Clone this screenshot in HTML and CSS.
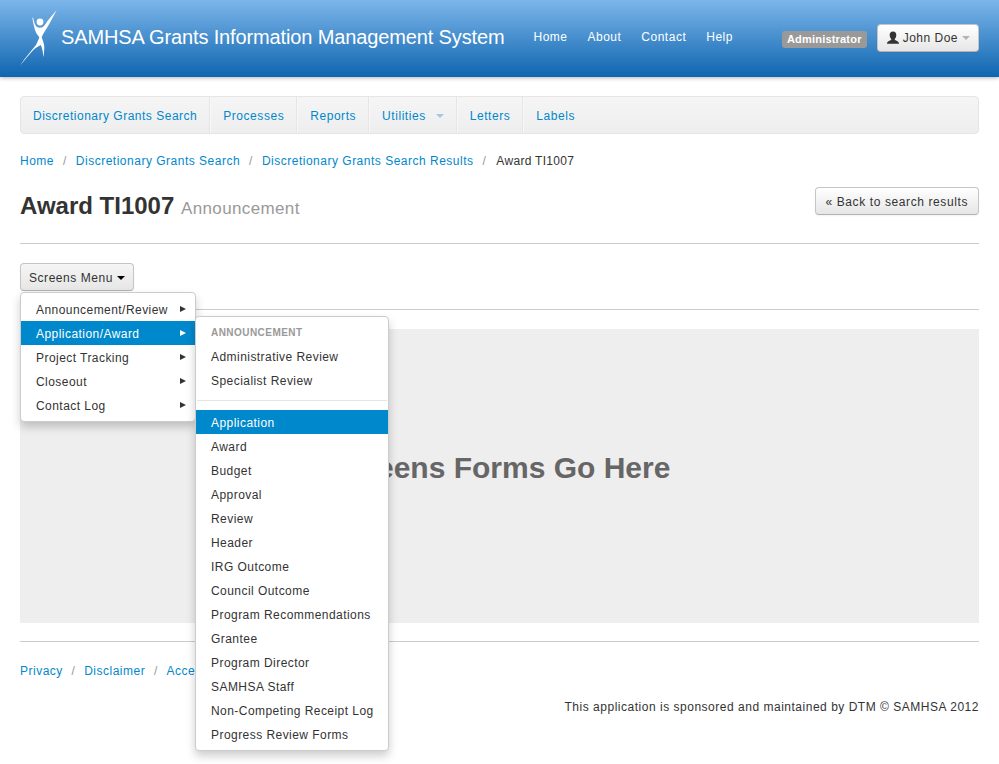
FILE: index.html
```html
<!DOCTYPE html>
<html lang="en">
<head>
<meta charset="utf-8">
<title>Award TI1007</title>
<link rel="stylesheet" href="styles.css">
</head>
<body>
<header class="topbar">
  <a class="brand" href="#">
    <svg class="logo" width="37" height="56" viewBox="0 0 37 56"><circle cx="20" cy="12" r="3.4" fill="#fff"/><path fill="#fff" d="M12.300 7.300 L13.300 8.300 C14 12 15 15.500 16.700 16.700 C18.500 18 21.500 18 23.300 16.700 C25 15 26.500 12.500 28.300 10 L36.700 0 C33 7 30 13 26.700 18.300 C24.500 22 22.700 24.500 21.700 27.300 C22.500 30 24 33 24.300 36.700 C24.300 40 24 44 23.300 47.300 C23 42 22.300 38 20.700 35 C18.500 36 15.500 38 13.300 40 C8.500 45 4 51 0 55.700 C5 48 11 41 16 35 C17.500 32 18.700 29.500 19.300 27.300 C17.500 25 16 23 15 20 C13.800 16 12.800 11 12.300 7.300 Z"/></svg>
    <span class="brand-text">SAMHSA Grants Information Management System</span>
  </a>
  <nav class="topnav">
    <a href="#">Home</a><a href="#">About</a><a href="#">Contact</a><a href="#">Help</a>
  </nav>
  <div class="userbox">
    <span class="badge">Administrator</span>
    <button class="btn user-btn"><svg class="person" width="14" height="14" viewBox="0 0 14 14"><path fill="#333" d="M7 0.500 C9.200 0.500 10.300 2 10.300 4 C10.300 6 9.500 7.300 8.800 8 L8.800 9 C10.500 9.800 13 10.300 13 12.800 L1 12.800 C1 10.300 3.500 9.800 5.200 9 L5.200 8 C4.500 7.300 3.700 6 3.700 4 C3.700 2 4.800 0.500 7 0.500 Z"/></svg>John Doe<span class="caret caret-light"></span></button>
  </div>
</header>

<main class="page">
  <nav class="subnav">
    <a href="#">Discretionary Grants Search</a>
    <a href="#">Processes</a>
    <a href="#">Reports</a>
    <a href="#">Utilities<span class="caret caret-blue"></span></a>
    <a href="#">Letters</a>
    <a href="#" class="plain">Labels</a>
  </nav>

  <ul class="breadcrumb">
    <li><a href="#">Home</a></li>
    <li class="sep">/</li>
    <li><a href="#">Discretionary Grants Search</a></li>
    <li class="sep">/</li>
    <li><a href="#">Discretionary Grants Search Results</a></li>
    <li class="sep">/</li>
    <li class="current">Award TI1007</li>
  </ul>

  <div class="page-header">
    <h1>Award TI1007 <small>Announcement</small></h1>
    <button class="btn back-btn">« Back to search results</button>
  </div>

  <div class="menu-wrap">
    <button class="btn screens-btn">Screens Menu<span class="caret caret-dark"></span></button>
    <ul class="dropdown first-menu">
      <li><a href="#">Announcement/Review<span class="arrow"></span></a></li>
      <li class="active"><a href="#">Application/Award<span class="arrow"></span></a></li>
      <li><a href="#">Project Tracking<span class="arrow"></span></a></li>
      <li><a href="#">Closeout<span class="arrow"></span></a></li>
      <li><a href="#">Contact Log<span class="arrow"></span></a></li>
    </ul>
    <ul class="dropdown second-menu">
      <li class="nav-header">Announcement</li>
      <li><a href="#">Administrative Review</a></li>
      <li><a href="#">Specialist Review</a></li>
      <li class="divider"></li>
      <li class="active"><a href="#">Application</a></li>
      <li><a href="#">Award</a></li>
      <li><a href="#">Budget</a></li>
      <li><a href="#">Approval</a></li>
      <li><a href="#">Review</a></li>
      <li><a href="#">Header</a></li>
      <li><a href="#">IRG Outcome</a></li>
      <li><a href="#">Council Outcome</a></li>
      <li><a href="#">Program Recommendations</a></li>
      <li><a href="#">Grantee</a></li>
      <li><a href="#">Program Director</a></li>
      <li><a href="#">SAMHSA Staff</a></li>
      <li><a href="#">Non-Competing Receipt Log</a></li>
      <li><a href="#">Progress Review Forms</a></li>
    </ul>
  </div>

  <hr class="rule-mid">
  <section class="panel"><h2>Screens Forms Go Here</h2></section>
  <hr class="rule-foot">

  <footer class="footer">
    <div class="footer-links"><a href="#">Privacy</a><span>/</span><a href="#">Disclaimer</a><span>/</span><a href="#">Acce</a></div>
    <p class="sponsor">This application is sponsored and maintained by DTM © SAMHSA 2012</p>
  </footer>
</main>
</body>
</html>
```

FILE: styles.css
```css
* { box-sizing: border-box; }
html, body { margin: 0; padding: 0; }
body {
  width: 999px;
  height: 764px;
  overflow: hidden;
  background: #fff;
  color: #333;
  font-family: "Liberation Sans", Arial, sans-serif;
  font-size: 12px;
  line-height: 18px;
  letter-spacing: 0.5px;
}
a { color: #0088cc; text-decoration: none; }
button { font-family: inherit; letter-spacing: inherit; }

.topbar {
  height: 77px;
  display: flex;
  align-items: flex-start;
  padding: 0 20px;
  background: linear-gradient(#7cb6ea, #0f65b0);
  box-shadow: 0 1px 4px rgba(0, 0, 0, 0.3);
}
.brand { display: flex; color: #fff; }
.logo { flex: none; margin-top: 10px; }
.brand-text { font-size: 20px; line-height: 24px; margin: 25px 0 0 4px; letter-spacing: -0.13px; white-space: nowrap; }
.topnav { display: flex; gap: 20px; margin: 28px 0 0 29px; }
.topnav a { color: #fff; }
.userbox { display: flex; align-items: flex-start; margin-left: auto; }
.badge {
  margin-top: 31px;
  height: 17px;
  padding: 0 5px;
  background: #999;
  border-radius: 3px;
  color: #fff;
  font-size: 11px;
  font-weight: bold;
  line-height: 17px;
  letter-spacing: 0.2px;
}
.btn {
  display: inline-flex;
  align-items: center;
  margin: 0;
  border: 1px solid #c5c5c5;
  border-bottom-color: #b3b3b3;
  border-radius: 4px;
  background: linear-gradient(#fff, #e6e6e6);
  color: #333;
  font-size: 12px;
  line-height: 18px;
  box-shadow: inset 0 1px 0 rgba(255,255,255,.2), 0 1px 2px rgba(0,0,0,.05);
}
.user-btn { margin: 24px 0 0 10px; height: 28px; padding: 0 8px; }
.person { margin-right: 3px; }
.caret { display: inline-block; width: 0; height: 0; border-left: 4px solid transparent; border-right: 4px solid transparent; border-top: 4px solid #000; }
.caret-light { border-top-color: #b5b5b5; margin-left: 4px; }
.caret-blue { border-top-color: #9fc9e2; margin-left: 10px; vertical-align: 2px; }
.caret-dark { margin-left: 4px; vertical-align: 2px; }

.page { padding: 0 20px; }
.subnav {
  display: flex;
  margin-top: 19px;
  height: 38px;
  border: 1px solid #e5e5e5;
  border-radius: 4px;
  background: linear-gradient(#f5f5f5, #eeeeee);
}
.subnav a {
  padding: 0 12px 0 13px;
  line-height: 38px;
  letter-spacing: 0.55px;
  border-right: 1px solid #e5e5e5;
  box-shadow: 1px 0 0 #f8f8f8;
}
.subnav a:first-child { padding-left: 12px; letter-spacing: 0.5px; }
.subnav a.plain { border-right: 0; box-shadow: none; }

.breadcrumb { display: flex; list-style: none; margin: 18px 0 0; padding: 0; height: 18px; }
.breadcrumb .sep { margin: 0 9px; color: #999; }
.breadcrumb .current { letter-spacing: 0.3px; margin-left: 1px; }

.page-header { display: flex; justify-content: space-between; align-items: flex-start; height: 58px; margin-top: 16px; border-bottom: 1px solid #ccc; }
h1 { margin: 0; font-size: 24px; line-height: 40px; font-weight: bold; letter-spacing: 0; color: #333; }
h1 small { font-size: 17px; font-weight: normal; color: #999; letter-spacing: 0.37px; }
.back-btn { height: 28px; padding: 1px 10px 0; margin-top: 1px; letter-spacing: 0.6px; }

.menu-wrap { position: relative; margin-top: 19px; height: 28px; }
.screens-btn { height: 28px; padding: 1px 8px 0; letter-spacing: 0.55px; background: linear-gradient(#f5f5f5, #e6e6e6); }
.dropdown {
  position: absolute;
  z-index: 10;
  list-style: none;
  margin: 0;
  padding: 4px 0;
  background: #fff;
  border: 1px solid #ccc;
  border-radius: 4px;
  box-shadow: 0 5px 10px rgba(0, 0, 0, 0.2);
  letter-spacing: 0.45px;
}
.first-menu { left: 0; top: 29px; width: 176px; }
.second-menu { left: 175px; top: 53px; width: 194px; }
.dropdown li a { position: relative; display: block; height: 24px; padding: 0 15px; line-height: 26px; color: #333; white-space: nowrap; }
.dropdown li.active a { background: #0088cc; color: #fff; }
.arrow { position: absolute; right: 9px; top: 9px; width: 0; height: 0; border-top: 3px solid transparent; border-bottom: 3px solid transparent; border-left: 6px solid #333; }
.active .arrow { border-left-color: #fff; }
.nav-header { height: 23px; padding: 0 15px; font-size: 10px; font-weight: bold; line-height: 23px; color: #999; text-transform: uppercase; }
.divider { height: 1px; margin: 8px 1px 9px; background: #e5e5e5; }

hr { display: block; margin: 0; border: 0; border-top: 1px solid #ccc; }
.rule-mid { margin-top: 18px; }
.panel { display: flex; align-items: center; justify-content: center; height: 294px; margin-top: 19px; padding-bottom: 16px; background: #eeeeee; }
.panel h2 { margin: 0; font-size: 30px; line-height: 40px; font-weight: bold; color: #666; letter-spacing: 0; }
.rule-foot { margin-top: 18px; }
.footer-links { margin-top: 20px; display: flex; }
.footer-links span { margin: 0 8.75px; color: #999; }
.sponsor { margin: 18px 0 0; text-align: right; letter-spacing: 0.515px; }
```
